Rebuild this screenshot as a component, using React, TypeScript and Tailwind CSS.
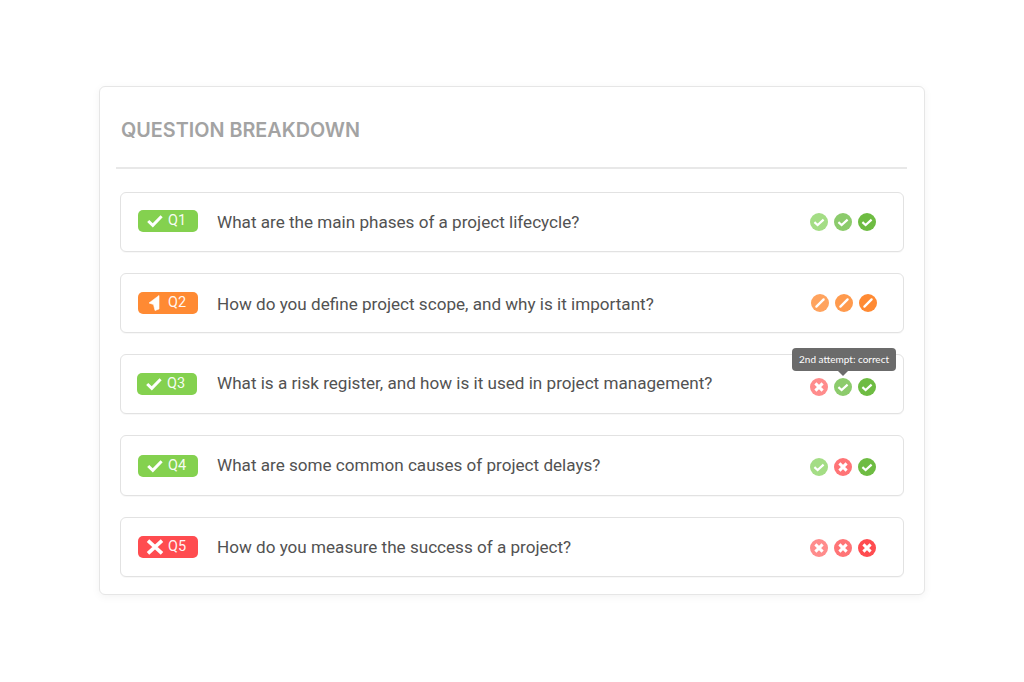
import React from 'react';

type Kind = 'check' | 'pencil' | 'cross';

interface Attempt {
    kind: Kind;
    color: string;
}

interface Question {
    id: string;
    text: string;
    badge: string;
    badgeIcon: 'check' | 'arrow' | 'cross';
    attempts: Attempt[];
    rowClass: string;
    badgeClass: string;
    textClass: string;
    attemptsClass: string;
    tooltip?: string;
}

const questions: Question[] = [
    {
        id: 'Q1',
        text: 'What are the main phases of a project lifecycle?',
        badge: 'bg-[#84d14f]',
        badgeIcon: 'check',
        attempts: [
            { kind: 'check', color: 'bg-[#a4dd85]' },
            { kind: 'check', color: 'bg-[#8ccb6c]' },
            { kind: 'check', color: 'bg-[#6ebc42]' },
        ],
        rowClass: 'h-[60px]',
        badgeClass: 'ml-[17px] -mt-[2px]',
        textClass: 'ml-[19px]',
        attemptsClass: 'mr-[27px]',
    },
    {
        id: 'Q2',
        text: 'How do you define project scope, and why is it important?',
        badge: 'bg-[#ff8a33]',
        badgeIcon: 'arrow',
        attempts: [
            { kind: 'pencil', color: 'bg-[#ffa35e]' },
            { kind: 'pencil', color: 'bg-[#ff9a4d]' },
            { kind: 'pencil', color: 'bg-[#ff8a33]' },
        ],
        rowClass: 'h-[60px]',
        badgeClass: 'ml-[17px]',
        textClass: 'ml-[19px] mt-[2px]',
        attemptsClass: 'mr-[26px]',
    },
    {
        id: 'Q3',
        text: 'What is a risk register, and how is it used in project management?',
        badge: 'bg-[#84d14f]',
        badgeIcon: 'check',
        attempts: [
            { kind: 'cross', color: 'bg-[#ff8c8c]' },
            { kind: 'check', color: 'bg-[#8ccb6c]' },
            { kind: 'check', color: 'bg-[#6ebc42]' },
        ],
        rowClass: 'h-[60px]',
        badgeClass: 'ml-[16px]',
        textClass: 'ml-[20px] -mt-[2px]',
        attemptsClass: 'mr-[27px] mt-[5px]',
        tooltip: '2nd attempt: correct',
    },
    {
        id: 'Q4',
        text: 'What are some common causes of project delays?',
        badge: 'bg-[#84d14f]',
        badgeIcon: 'check',
        attempts: [
            { kind: 'check', color: 'bg-[#a4dd85]' },
            { kind: 'cross', color: 'bg-[#ff7476]' },
            { kind: 'check', color: 'bg-[#6ebc42]' },
        ],
        rowClass: 'h-[61px]',
        badgeClass: 'ml-[17px]',
        textClass: 'ml-[19px] -mt-[1px]',
        attemptsClass: 'mr-[27px] mt-[2px]',
    },
    {
        id: 'Q5',
        text: 'How do you measure the success of a project?',
        badge: 'bg-[#ff4c50]',
        badgeIcon: 'cross',
        attempts: [
            { kind: 'cross', color: 'bg-[#ff8c8c]' },
            { kind: 'cross', color: 'bg-[#ff7476]' },
            { kind: 'cross', color: 'bg-[#ff4c50]' },
        ],
        rowClass: 'h-[60px]',
        badgeClass: 'ml-[17px]',
        textClass: 'ml-[19px]',
        attemptsClass: 'mr-[27px] mt-[2px]',
    },
];

function AttemptIcon({ kind }: { kind: Kind }) {
    if (kind === 'check') {
        return (
            <svg viewBox="0 0 18 18" className="h-[18px] w-[18px]" fill="none" stroke="white" strokeWidth="2.2">
                <path d="M4.4 9.2 L7.6 12 L13.6 6.6" />
            </svg>
        );
    }
    if (kind === 'pencil') {
        return (
            <svg viewBox="0 0 18 18" className="h-[18px] w-[18px]" fill="none" stroke="white" strokeWidth="2.3" strokeLinecap="round">
                <path d="M5.4 12.6 L12.6 5.4" />
            </svg>
        );
    }
    return (
        <svg viewBox="0 0 18 18" className="h-[18px] w-[18px]" fill="none" stroke="white" strokeWidth="3">
            <path d="M5.4 5.4 L12.6 12.6 M12.6 5.4 L5.4 12.6" />
        </svg>
    );
}

function BadgeIcon({ icon }: { icon: Question['badgeIcon'] }) {
    if (icon === 'check') {
        return (
            <svg viewBox="0 0 16 14" className="h-[14px] w-[16px]" fill="none" stroke="white" strokeWidth="3">
                <path d="M1.2 7 L5.8 11.4 L14.6 2.2" />
            </svg>
        );
    }
    if (icon === 'arrow') {
        return (
            <svg viewBox="0 0 16 18" className="h-[18px] w-[16px]" fill="white" stroke="white" strokeWidth="0.6" strokeLinejoin="round">
                <path d="M12 1.5 L12 15 L8 16.5 L6.5 10.5 L2 9 Z" />
            </svg>
        );
    }
    return (
        <svg viewBox="0 0 18 16" className="h-[16px] w-[18px]" fill="none" stroke="white" strokeWidth="3.6">
            <path d="M2 1.6 L16 14.4 M16 1.6 L2 14.4" />
        </svg>
    );
}

function QuestionRow({ q }: { q: Question }) {
    return (
        <div className={`ml-[4px] flex w-[784px] items-center rounded-md border border-[#e2e2e2] bg-white shadow-[0_1px_1px_rgba(0,0,0,0.03)] ${q.rowClass}`}>
            <div className={`flex h-[22px] w-[60px] items-center rounded-[5px] pl-[7px] ${q.badge} ${q.badgeClass}`}>
                <span className="flex w-[20px] justify-center">
                    <BadgeIcon icon={q.badgeIcon} />
                </span>
                <span className="ml-[3px] mt-[1px] text-[14.5px] leading-none text-white/95">{q.id}</span>
            </div>
            <p className={`text-[17.1px] leading-6 text-[#525252] ${q.textClass}`}>{q.text}</p>
            <div className={`relative ml-auto flex gap-[6px] ${q.attemptsClass}`}>
                {q.tooltip && (
                    <div className="absolute -top-[30px] left-[-18px] whitespace-nowrap rounded-[4px] bg-[#6b6b6b] px-[7px] py-[4px] font-['Lato',sans-serif] text-[10px] leading-[15px] text-white">
                        {q.tooltip}
                        <span className="absolute -bottom-[5px] left-[46px] h-0 w-0 border-x-[5px] border-t-[5px] border-x-transparent border-t-[#6b6b6b]" />
                    </div>
                )}
                {q.attempts.map((a, i) => (
                    <span key={i} className={`flex h-[18px] w-[18px] items-center justify-center rounded-full ${a.color}`}>
                        <AttemptIcon kind={a.kind} />
                    </span>
                ))}
            </div>
        </div>
    );
}

export default function App() {
    return (
        <div className="min-h-[682px] bg-white pt-[86px] font-['Roboto',sans-serif]">
            <div className="mx-auto h-[509px] w-[826px] rounded-[6px] border border-[#e6e6e6] bg-white pl-[16px] shadow-[0_2px_8px_rgba(0,0,0,0.05)]">
                <h2 className="pl-[5px] pt-[31px] font-['Inter',sans-serif] text-[19.8px] font-semibold leading-6 text-[#a3a3a3]">
                    QUESTION BREAKDOWN
                </h2>
                <div className="mt-[25px] h-[2px] w-[791px] bg-[#e8e8e8]" />
                <div className="mt-[23px] flex flex-col gap-[21px]">
                    {questions.map((q) => (
                        <QuestionRow key={q.id} q={q} />
                    ))}
                </div>
            </div>
        </div>
    );
}
